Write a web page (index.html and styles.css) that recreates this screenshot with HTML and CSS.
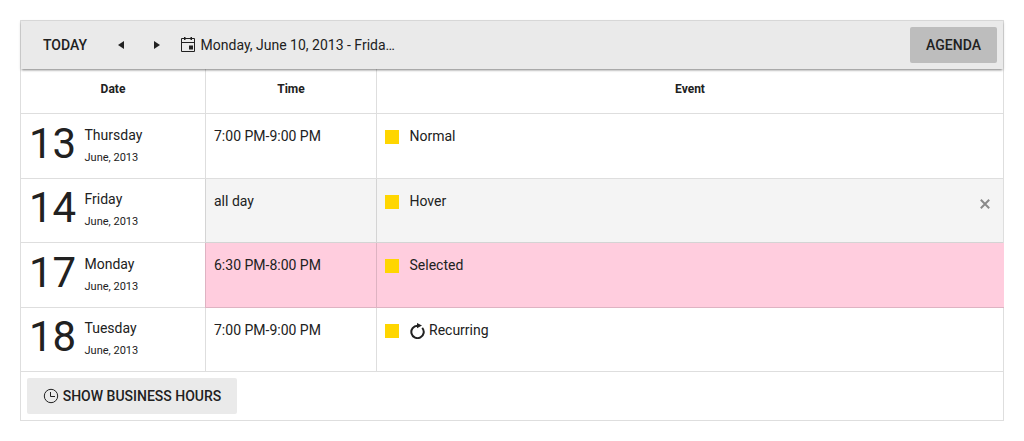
FILE: index.html
```html
<!DOCTYPE html>
<html lang="en">
<head>
<meta charset="utf-8">
<title>Scheduler agenda</title>
<link rel="stylesheet" href="styles.css">
</head>
<body>
<div class="scheduler">
  <div class="toolbar">
    <button class="today">TODAY</button>
    <button class="nav"><svg width="6" height="8" viewBox="0 0 6 8"><path d="M6 0v8L0 4z"/></svg></button>
    <button class="nav next"><svg width="6" height="8" viewBox="0 0 6 8"><path d="M0 0v8l6-4z"/></svg></button>
    <div class="range">
      <svg width="16" height="16" viewBox="0 0 16 16"><path d="M1.500 1.500h13v13h-13zM1.500 5.500h13" fill="none" stroke="#212121"/><path d="M4 0h1.500v3H4zM10.500 0H12v3h-1.500zM9 8.500h4v4H9z"/></svg>
      <span>Monday, June 10, 2013 - Frida…</span>
    </div>
    <button class="agenda">AGENDA</button>
  </div>
  <div class="grid">
    <div class="row head"><div class="cell">Date</div><div class="cell">Time</div><div class="cell">Event</div></div>
    <div class="row">
      <div class="cell date"><span class="day">13</span><div><div class="weekday">Thursday</div><div class="month">June, 2013</div></div></div>
      <div class="cell">7:00 PM-9:00 PM</div>
      <div class="cell event"><span class="mark"></span><span>Normal</span></div>
    </div>
    <div class="row short hover">
      <div class="cell date"><span class="day">14</span><div><div class="weekday">Friday</div><div class="month">June, 2013</div></div></div>
      <div class="cell">all day</div>
      <div class="cell event"><span class="mark"></span><span>Hover</span>
        <svg class="close" width="10" height="10" viewBox="0 0 10 10"><path d="M.8.800l8.400 8.400M9.200.800L.8 9.200"/></svg>
      </div>
    </div>
    <div class="row selected">
      <div class="cell date"><span class="day">17</span><div><div class="weekday">Monday</div><div class="month">June, 2013</div></div></div>
      <div class="cell">6:30 PM-8:00 PM</div>
      <div class="cell event"><span class="mark"></span><span>Selected</span></div>
    </div>
    <div class="row short">
      <div class="cell date"><span class="day">18</span><div><div class="weekday">Tuesday</div><div class="month">June, 2013</div></div></div>
      <div class="cell">7:00 PM-9:00 PM</div>
      <div class="cell event"><span class="mark"></span>
        <svg class="recur" width="16" height="16" viewBox="0 0 16 16"><path d="M12.200 4.800A6.200 6.200 0 1 1 7.500 2.700" fill="none" stroke="#212121" stroke-width="2"/><path d="M7 0l5 2.600-5 2.700z"/></svg>
        <span>Recurring</span></div>
    </div>
  </div>
  <div class="footer">
    <button class="hours"><svg width="16" height="16" viewBox="0 0 16 16"><path d="M7.500 4v4.500H12" fill="none" stroke="#212121"/><circle cx="8" cy="8" r="6.700" fill="none" stroke="#212121"/></svg>SHOW BUSINESS HOURS</button>
  </div>
</div>
</body>
</html>
```
FILE: styles.css
```css
* { box-sizing: border-box; }
body {
  margin: 0;
  padding: 20px;
  background: #fff;
  color: #212121;
  font: 14px/20px Roboto, sans-serif;
}
svg { display: block; flex: none; fill: #212121; }
button {
  display: flex;
  align-items: center;
  justify-content: center;
  height: 36px;
  padding: 0;
  border: 0;
  border-radius: 2px;
  background: none;
  color: inherit;
  font: 500 14px/20px Roboto, sans-serif;
}
.scheduler { width: 984px; height: 401px; border: 1px solid #dedede; }
.toolbar {
  position: relative;
  display: flex;
  align-items: center;
  height: 48px;
  padding: 0 6px;
  background: #eaeaea;
  box-shadow: 0 2px 2px -1px rgba(0, 0, 0, .36), 0 1px 3px rgba(0, 0, 0, .2);
}
.today { width: 76px; }
.nav { width: 36px; }
.next { width: 35px; }
.range { display: flex; align-items: center; gap: 4.400px; margin-left: 6.200px; }
.agenda { width: 87px; margin-left: auto; background: #bdbdbd; }
.row { display: grid; grid-template: 100% / 184px 171px 1fr; height: 65px; }
.short { height: 64px; }
.cell { padding: 12px 8px 0; border-bottom: 1px solid rgba(33, 33, 33, .15); }
.cell + .cell { border-left: 1px solid rgba(33, 33, 33, .15); }
.head { height: 45px; font-size: 12px; font-weight: 700; text-align: center; }
.head .cell { padding: 10px 8px 0; }
.date { display: flex; gap: 8.300px; padding-top: 11px; }
.short .date { padding-top: 10px; }
.day { font-size: 42px; line-height: 37px; }
.month { margin-top: 4px; font-size: 11px; line-height: 18px; }
.event { display: flex; align-items: flex-start; }
.mark { width: 14px; height: 14px; margin: 4px 10.500px 0 0; background: #ffd600; }
.hover .cell + .cell { background: #f4f4f4; }
.selected .cell + .cell { background: #ffcdde; }
.selected .event { margin-right: -1px; }
.close { margin: 8px 5px 0 auto; fill: none; stroke: #8a8a8a; stroke-width: 2; }
.recur { margin: 3px 3.500px 0 0; }
.footer { display: flex; align-items: center; height: 48px; padding: 0 6px; }
.hours { width: 210px; gap: 4px; background: #eaeaea; }
```
